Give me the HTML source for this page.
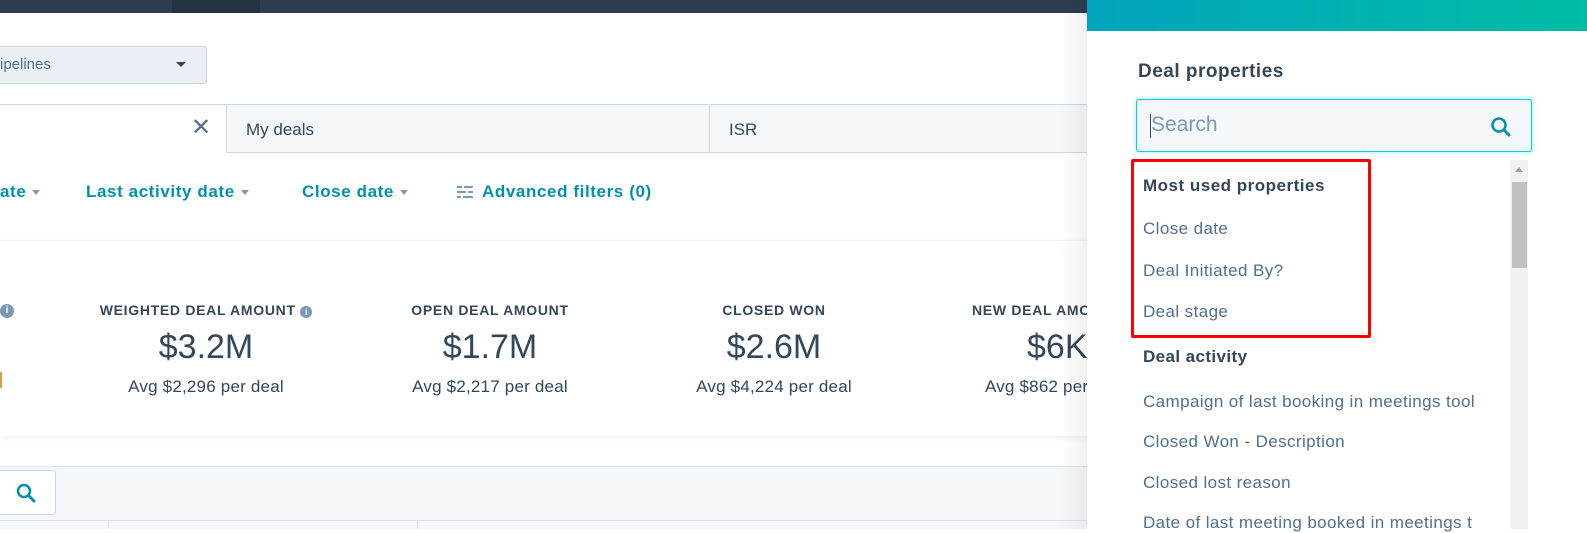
<!DOCTYPE html>
<html><head><style>
*{margin:0;padding:0;box-sizing:border-box}
body{width:1587px;height:529px;overflow:hidden;background:#fff;font-family:"Liberation Sans",sans-serif;color:#33475b;position:relative}
.a{position:absolute}
.topbar{left:0;top:0;width:1100px;height:13px;background:#2d3e50}
.link{color:#0091ae;font-weight:bold;font-size:17px;letter-spacing:.6px}
.lbl{font-weight:bold;font-size:14px;letter-spacing:.7px;text-align:center}
.big{font-size:34px;text-align:center;color:#33475b}
.avg{font-size:17px;text-align:center;letter-spacing:.2px}
.tri{display:inline-block;width:0;height:0;border-left:4px solid transparent;border-right:4px solid transparent;border-top:5px solid #7c98b6;vertical-align:middle;margin-left:6px}
.item{font-size:17px;color:#516f90;left:1143px;letter-spacing:.4px;white-space:nowrap}
</style></head><body>
<div class="a topbar"></div>
<div class="a" style="left:172px;top:0;width:88px;height:13px;background:#253342"></div>
<div class="a" style="left:-5px;top:46px;width:212px;height:38px;background:#eaf0f6;border:1px solid #cbd6e2;border-radius:3px"></div>
<div class="a" style="left:0;top:56px;font-size:15px;color:#516f90">ipelines</div>
<div class="a" style="left:176px;top:62px;border-left:5px solid transparent;border-right:5px solid transparent;border-top:5px solid #33475b"></div>
<div class="a" style="left:0;top:104px;width:1100px;height:1px;background:#cbd6e2"></div>
<div class="a" style="left:226px;top:104px;width:874px;height:49px;background:#f5f8fa;border:1px solid #cbd6e2"></div>
<div class="a" style="left:709px;top:104px;width:1px;height:49px;background:#cbd6e2"></div>
<div class="a" style="left:191px;top:113px;font-size:24px;color:#516f90">✕</div>
<div class="a" style="left:246px;top:120px;font-size:17px">My deals</div>
<div class="a" style="left:729px;top:120px;font-size:17px">ISR</div>
<div class="a link" style="left:0;top:182px">ate<span class="tri"></span></div>
<div class="a link" style="left:86px;top:182px">Last activity date<span class="tri"></span></div>
<div class="a link" style="left:302px;top:182px">Close date<span class="tri"></span></div>
<svg class="a" style="left:456px;top:184px" width="18" height="16"><g stroke="#7c98b6" stroke-width="2"><line x1="1" y1="3" x2="17" y2="3"/><line x1="1" y1="8" x2="17" y2="8"/><line x1="1" y1="13" x2="17" y2="13"/></g><g fill="#fff"><rect x="6" y="1" width="2" height="4"/><rect x="10" y="6" width="2" height="4"/><rect x="5" y="11" width="2" height="4"/></g></svg>
<div class="a link" style="left:482px;top:182px">Advanced filters (0)</div>
<div class="a" style="left:0;top:240px;width:1100px;height:196px;background:#fff;box-shadow:0 2px 6px rgba(0,0,0,.06);border-top:1px solid #f0f3f6"></div>
<div class="a" style="left:0;top:304px;width:14px;height:14px;border-radius:50%;background:#7c98b6;color:#fff;font-size:10px;text-align:center;line-height:14px;font-weight:bold">i</div>
<div class="a" style="left:0;top:372px;width:2px;height:16px;background:#d4a055"></div>
<div class="a lbl" style="left:56px;top:302px;width:300px">WEIGHTED DEAL AMOUNT <span style="display:inline-block;width:12px;height:12px;border-radius:50%;background:#7c98b6;color:#fff;font-size:9px;line-height:12px;letter-spacing:0">i</span></div>
<div class="a big" style="left:56px;top:328px;width:300px">$3.2M</div>
<div class="a avg" style="left:56px;top:377px;width:300px">Avg $2,296 per deal</div>
<div class="a lbl" style="left:340px;top:302px;width:300px">OPEN DEAL AMOUNT</div>
<div class="a big" style="left:340px;top:328px;width:300px">$1.7M</div>
<div class="a avg" style="left:340px;top:377px;width:300px">Avg $2,217 per deal</div>
<div class="a lbl" style="left:624px;top:302px;width:300px">CLOSED WON</div>
<div class="a big" style="left:624px;top:328px;width:300px">$2.6M</div>
<div class="a avg" style="left:624px;top:377px;width:300px">Avg $4,224 per deal</div>
<div class="a lbl" style="left:972px;top:302px;white-space:nowrap">NEW DEAL AMOUNT</div>
<div class="a big" style="left:1027px;top:328px">$6K</div>
<div class="a avg" style="left:985px;top:377px;white-space:nowrap">Avg $862 per deal</div>
<div class="a" style="left:0;top:466px;width:1100px;height:63px;background:#f5f8fa;border-top:1px solid #dfe3eb"></div>
<div class="a" style="left:-5px;top:470px;width:61px;height:45px;background:#fff;border:1px solid #cbd6e2;border-radius:3px"></div>
<svg class="a" style="left:16px;top:483px" width="20" height="20"><circle cx="8" cy="8" r="6" fill="none" stroke="#0091ae" stroke-width="2.5"/><line x1="12.5" y1="12.5" x2="18" y2="18" stroke="#0091ae" stroke-width="3" stroke-linecap="round"/></svg>
<div class="a" style="left:0;top:520px;width:1100px;height:1px;background:#dfe3eb"></div>
<div class="a" style="left:108px;top:520px;width:1px;height:9px;background:#dfe3eb"></div>
<div class="a" style="left:417px;top:520px;width:1px;height:9px;background:#dfe3eb"></div>
<div class="a" style="left:1060px;top:0;width:40px;height:529px;background:linear-gradient(90deg,rgba(0,0,0,0),rgba(0,0,0,.08))"></div>
<div class="a" style="left:1087px;top:0;width:500px;height:529px;background:#fff"></div>
<div class="a" style="left:1087px;top:0;width:500px;height:31px;background:linear-gradient(90deg,#00a4bd,#00bda5)"></div>
<div class="a" style="left:1138px;top:61px;font-size:19px;font-weight:bold;letter-spacing:.5px">Deal properties</div>
<div class="a" style="left:1136px;top:99px;width:396px;height:53px;background:#f5f8fa;border:1px solid #00d0e4;border-radius:3px;box-shadow:0 0 4px 1px rgba(0,208,228,.3)"></div>
<div class="a" style="left:1150px;top:114px;width:1px;height:24px;background:#33475b"></div>
<div class="a" style="left:1151px;top:113px;font-size:21px;color:#7c98b6">Search</div>
<svg class="a" style="left:1490px;top:116px" width="22" height="22"><circle cx="9" cy="9" r="6.5" fill="none" stroke="#0091ae" stroke-width="2.5"/><line x1="14" y1="14" x2="19" y2="19" stroke="#0091ae" stroke-width="3" stroke-linecap="round"/></svg>
<div class="a" style="left:1510px;top:160px;width:18px;height:369px;background:#f1f1f1"></div>
<div class="a" style="left:1515px;top:167px;border-left:4px solid transparent;border-right:4px solid transparent;border-bottom:5px solid #a3a3a3"></div>
<div class="a" style="left:1512px;top:182px;width:15px;height:86px;background:#c1c1c1"></div>
<div class="a" style="left:1131px;top:159px;width:240px;height:179px;border:3px solid #f00;border-radius:2px"></div>
<div class="a" style="left:1143px;top:176px;font-size:17px;font-weight:bold;letter-spacing:.5px">Most used properties</div>
<div class="a item" style="top:219px">Close date</div>
<div class="a item" style="top:261px">Deal Initiated By?</div>
<div class="a item" style="top:302px">Deal stage</div>
<div class="a" style="left:1143px;top:347px;font-size:17px;font-weight:bold;letter-spacing:.4px">Deal activity</div>
<div class="a item" style="top:392px">Campaign of last booking in meetings tool</div>
<div class="a item" style="top:432px">Closed Won - Description</div>
<div class="a item" style="top:473px">Closed lost reason</div>
<div class="a item" style="top:513px">Date of last meeting booked in meetings t</div>
</body></html>
